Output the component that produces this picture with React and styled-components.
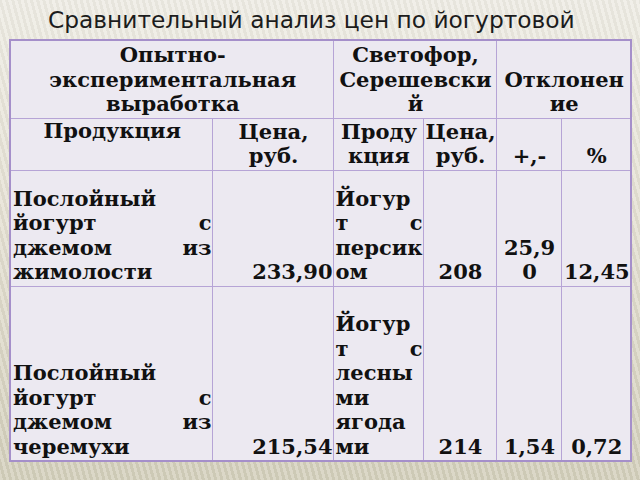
import React from "react";
import styled, { createGlobalStyle } from "styled-components";

const GlobalStyle = createGlobalStyle`
  html, body {
    margin: 0;
    padding: 0;
  }
  body {
    width: 640px;
    height: 480px;
    overflow: hidden;
  }
`;

const Slide = styled.div`
  width: 640px;
  height: 480px;
  box-sizing: border-box;
  background:
    repeating-linear-gradient(
      75deg,
      rgba(255, 255, 255, 0.18) 0px,
      rgba(255, 255, 255, 0.18) 3px,
      rgba(0, 0, 0, 0.03) 3px,
      rgba(0, 0, 0, 0.03) 6px
    ),
    linear-gradient(180deg, #eeece4 0%, #e4e0d2 45%, #d3cfbb 100%);
  display: flex;
  flex-direction: column;
`;

const Title = styled.h1`
  margin: 0;
  height: 39px;
  box-sizing: border-box;
  padding: 6px 0 0 48px;
  font-family: "DejaVu Sans", sans-serif;
  font-weight: normal;
  font-size: 23.3px;
  line-height: 28px;
  color: #1c1c1c;
  white-space: nowrap;
`;

const Table = styled.table`
  margin-left: 9px;
  width: 621px;
  height: 421px;
  table-layout: fixed;
  border-collapse: collapse;
  background: #ece9f1;
  border: 2px solid #a58fca;
  font-family: "DejaVu Serif", serif;
  font-weight: bold;
  font-size: 21px;
  line-height: 24.5px;
  color: #111;
`;

const Row = styled.tr`
  height: ${(p) => p.$h}px;
`;

const Cell = styled.td`
  border: 1px solid #b6a4d6;
  padding: 0 0 1px 2px;
  vertical-align: ${(p) => p.$valign || "bottom"};
  text-align: ${(p) => p.$align || "center"};
  overflow-wrap: anywhere;
  word-break: normal;
  overflow: visible;
  white-space: normal;
`;

export default function App() {
  return (
    <>
      <GlobalStyle />
      <Slide>
        <Title>Сравнительный анализ цен по йогуртовой</Title>
        <Table>
          <colgroup>
            <col style={{ width: 202 }} />
            <col style={{ width: 121 }} />
            <col style={{ width: 90 }} />
            <col style={{ width: 73 }} />
            <col style={{ width: 65 }} />
            <col style={{ width: 70 }} />
          </colgroup>
          <tbody>
            <Row $h={78}>
              <Cell colSpan={2}>Опытно-экспериментальная выработка</Cell>
              <Cell colSpan={2}>Светофор, Серешевский</Cell>
              <Cell colSpan={2}>Отклонение</Cell>
            </Row>
            <Row $h={52}>
              <Cell $valign="top">Продукция</Cell>
              <Cell>Цена, руб.</Cell>
              <Cell>Продукция</Cell>
              <Cell>Цена, руб.</Cell>
              <Cell>+,-</Cell>
              <Cell>%</Cell>
            </Row>
            <Row $h={116}>
              <Cell $align="justify">Послойный йогурт с джемом из жимолости</Cell>
              <Cell $align="right">233,90</Cell>
              <Cell $align="justify">Йогурт с персиком</Cell>
              <Cell>208</Cell>
              <Cell>25,90</Cell>
              <Cell>12,45</Cell>
            </Row>
            <Row $h={175}>
              <Cell $align="justify">Послойный йогурт с джемом из черемухи</Cell>
              <Cell $align="right">215,54</Cell>
              <Cell $align="justify">Йогурт с лесными ягодами</Cell>
              <Cell>214</Cell>
              <Cell>1,54</Cell>
              <Cell>0,72</Cell>
            </Row>
          </tbody>
        </Table>
      </Slide>
    </>
  );
}
